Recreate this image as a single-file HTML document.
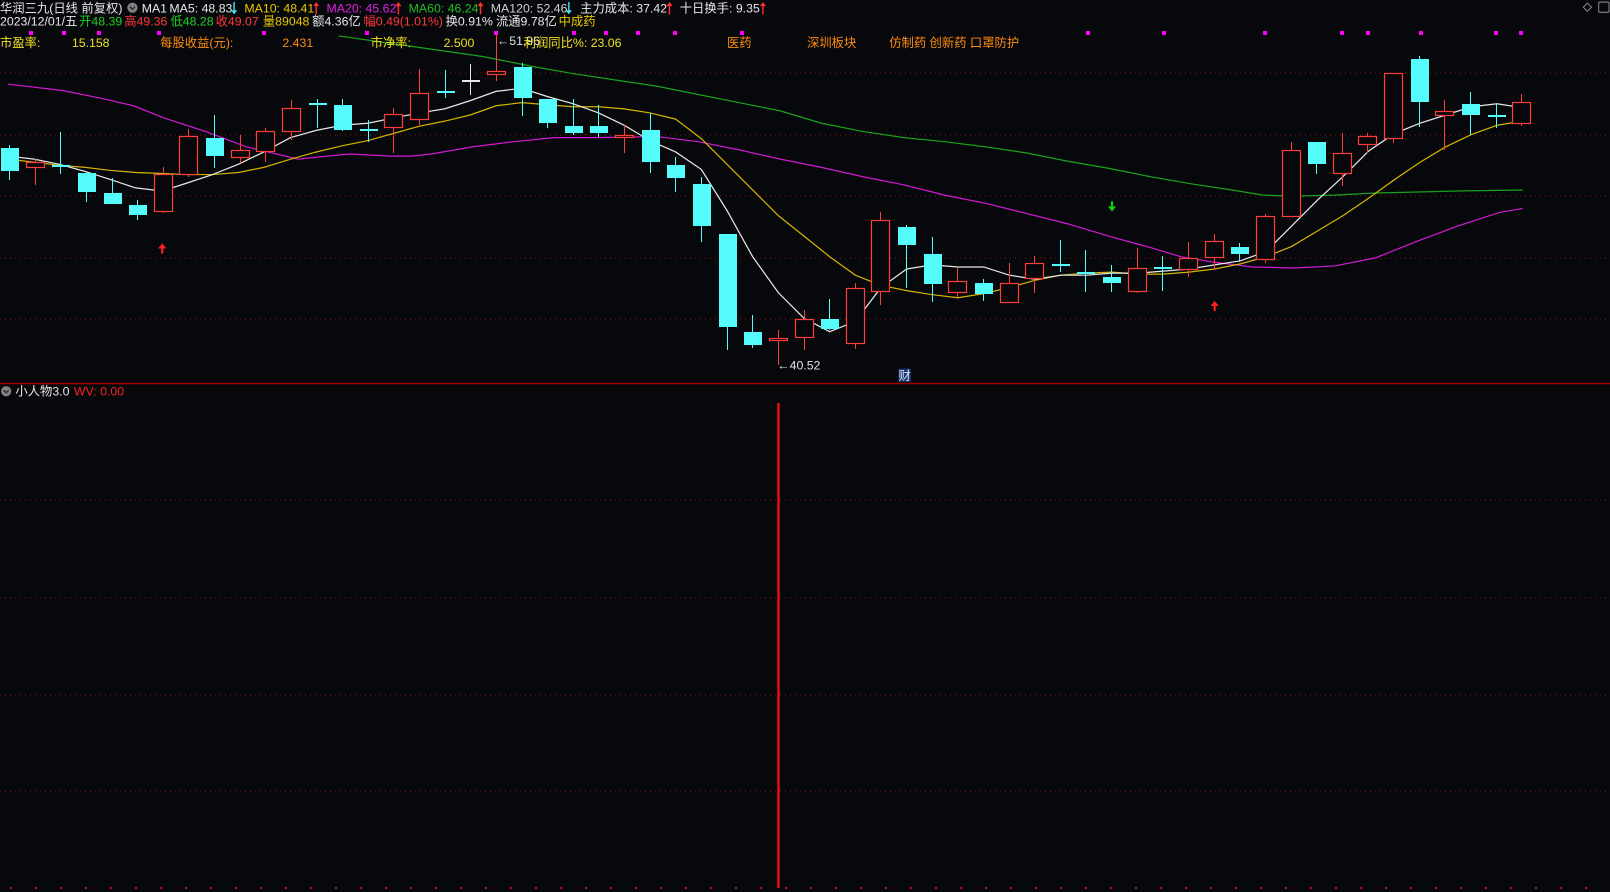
<!DOCTYPE html>
<html><head><meta charset="utf-8"><style>
html,body{margin:0;padding:0;background:#07080c;overflow:hidden}
svg{display:block}
text{font-family:"Liberation Sans","Noto Sans CJK SC",sans-serif;font-size:12px}
</style></head><body>
<svg id="s" width="1610" height="892" viewBox="0 0 1610 892" xmlns="http://www.w3.org/2000/svg">
<rect width="1610" height="892" fill="#07080c"/>
<g stroke="#8a1414" stroke-width="1" stroke-dasharray="1,4">
<line x1="0" y1="73" x2="1610" y2="73"/><line x1="0" y1="135" x2="1610" y2="135"/>
<line x1="0" y1="196" x2="1610" y2="196"/><line x1="0" y1="258" x2="1610" y2="258"/>
<line x1="0" y1="319" x2="1610" y2="319"/>
<line x1="0" y1="500" x2="1610" y2="500"/><line x1="0" y1="598" x2="1610" y2="598"/>
<line x1="0" y1="695" x2="1610" y2="695"/><line x1="0" y1="791" x2="1610" y2="791"/>
</g>
<g stroke="#c01818" stroke-width="2" stroke-dasharray="2,23"><line x1="10" y1="888" x2="1610" y2="888"/></g>
<line x1="0" y1="383.5" x2="1610" y2="383.5" stroke="#a00000" stroke-width="1.5"/>
<line x1="778.5" y1="403" x2="778.5" y2="888" stroke="#e41010" stroke-width="2.5"/>
<g id="mdots" fill="#ff00ff"></g>
<g transform="scale(1.0268)" fill="none" stroke-width="1.2">
<polyline id="l60" stroke="#1aa31a"/>
<polyline id="l20" stroke="#d21ad2"/>
<polyline id="l10" stroke="#d4b400"/>
<polyline id="l5" stroke="#e8e8e8"/>
</g>
<g id="cand"></g>
<g transform="scale(1.0268)">
<path d="M158 237 l-4 5 h3 v5 h2 v-5 h3z" fill="#ff2020"/>
<path d="M1183 293 l-4 5 h3 v5 h2 v-5 h3z" fill="#ff2020"/>
<path d="M1083 206 l-4 -5 h3 v-5 h2 v5 h3z" fill="#10d010"/>
<text x="757" y="360" fill="#e0e0e0">←40.52</text>
<text x="484" y="44" fill="#e0e0e0">←51.96</text>
<rect x="875" y="359" width="12" height="13" fill="#1a3a6a"/>
<text x="875" y="370" fill="#e0e0ff">财</text>
<text x="0" y="12" fill="#e8e8e8">华润三九(日线 前复权)</text>
<circle cx="129" cy="7.5" r="5" fill="#808080"/><path d="M126.5 6.5 l2.5 2.5 l2.5 -2.5" stroke="#222" fill="none" stroke-width="1.2"/>
<text x="138" y="12" fill="#e8e8e8">MA1</text>
<text x="165" y="12" fill="#e8e8e8">MA5: 48.83</text>
<text x="238" y="12" fill="#e8c800">MA10: 48.41</text>
<text x="318" y="12" fill="#e020e0">MA20: 45.62</text>
<text x="398" y="12" fill="#20c020">MA60: 46.24</text>
<text x="478" y="12" fill="#d0d0d0">MA120: 52.46</text>
<text x="565" y="12" fill="#e8e8e8">主力成本: 37.42</text>
<text x="662" y="12" fill="#e8e8e8">十日换手: 9.35</text>
<g fill="#40e0f0"><path d="M228 14 l-3 -4 h2.3 v-8 h1.4 v8 h2.3z"/><path d="M554 14 l-3 -4 h2.3 v-8 h1.4 v8 h2.3z"/></g>
<g fill="#ff3030"><path d="M308 2 l-3 4 h2.3 v8 h1.4 v-8 h2.3z"/><path d="M388 2 l-3 4 h2.3 v8 h1.4 v-8 h2.3z"/><path d="M468 2 l-3 4 h2.3 v8 h1.4 v-8 h2.3z"/><path d="M652 2 l-3 4 h2.3 v8 h1.4 v-8 h2.3z"/><path d="M743 2 l-3 4 h2.3 v8 h1.4 v-8 h2.3z"/></g>
<text x="0" y="25" fill="#e8e8e8">2023/12/01/五</text>
<text x="77" y="25" fill="#20d020">开48.39</text>
<text x="121" y="25" fill="#ff3838">高49.36</text>
<text x="166" y="25" fill="#20d020">低48.28</text>
<text x="210" y="25" fill="#ff3838">收49.07</text>
<text x="256" y="25" fill="#e8c800">量89048</text>
<text x="304" y="25" fill="#e8e8e8">额4.36亿</text>
<text x="354" y="25" fill="#ff3838">幅0.49(1.01%)</text>
<text x="434" y="25" fill="#e8e8e8">换0.91%</text>
<text x="483" y="25" fill="#e8e8e8">流通9.78亿</text>
<text x="544" y="25" fill="#e8c800">中成药</text>
<text x="0" y="46" fill="#f0e020">市盈率:</text>
<text x="70" y="46" fill="#f0e020">15.158</text>
<text x="156" y="46" fill="#ff8c10">每股收益(元):</text>
<text x="275" y="46" fill="#ff8c10">2.431</text>
<text x="361" y="46" fill="#f0e020">市净率:</text>
<text x="432" y="46" fill="#f0e020">2.500</text>
<text x="510" y="46" fill="#f0e020">利润同比%: 23.06</text>
<text x="708" y="46" fill="#ff8c10">医药</text>
<text x="786" y="46" fill="#ff8c10">深圳板块</text>
<text x="866" y="46" fill="#ff8c10">仿制药 创新药 口罩防护</text>
<circle cx="6" cy="381" r="5" fill="#808080"/><path d="M3.5 380 l2.5 2.5 l2.5 -2.5" stroke="#222" fill="none" stroke-width="1.2"/>
<text x="15" y="385" fill="#e8e8e8">小人物3.0</text>
<text x="72" y="385" fill="#ff2020">WV: 0.00</text>
<path d="M1546 3 l4 4 l-4 4 l-4 -4z" fill="none" stroke="#888"/>
<rect x="1557" y="2" width="10" height="10" rx="1" fill="none" stroke="#888"/>
</g>
</svg>
<script>
function P(id,s){document.getElementById(id).setAttribute("points",s);}
P("l5","8,152 33,155 58,160 83,167 108,175 132,183 158,186 183,178 207,170 232,160 257,148 283,134 308,127 333,122 358,120 383,115 408,110 433,106 458,98 483,89 508,86 533,94 558,101 583,110 608,122 633,137 658,148 683,165 708,205 733,250 758,285 783,310 808,323 833,313 858,280 883,262 908,258 933,260 958,260 983,268 1008,272 1033,268 1058,268 1083,266 1108,266 1133,264 1158,262 1183,258 1208,254 1233,245 1258,220 1283,195 1308,172 1333,147 1358,130 1383,120 1408,112 1433,104 1458,101 1483,105");
P("l10","8,155 33,158 58,161 83,163 108,166 132,168 158,169 183,170 207,170 232,168 257,163 283,155 308,148 333,142 358,137 383,130 408,123 433,118 458,112 483,103 508,100 533,102 558,104 583,104 608,106 633,110 658,116 683,135 708,160 733,185 758,210 783,230 808,250 833,268 858,278 883,283 908,287 933,290 958,286 983,280 1008,273 1033,268 1058,266 1083,265 1108,267 1133,267 1158,265 1183,262 1208,257 1233,250 1258,240 1283,225 1308,210 1333,193 1358,175 1383,158 1408,143 1433,131 1458,122 1483,118");
P("l20","8,82 60,88 100,96 130,103 160,115 200,128 240,143 290,155 340,150 380,152 400,152 420,150 460,143 500,138 540,134 580,134 640,133 680,138 720,146 760,155 800,163 840,172 880,180 920,190 960,198 1000,208 1040,218 1080,230 1120,241 1150,250 1180,255 1220,260 1260,261 1300,259 1340,251 1380,235 1420,220 1460,207 1483,203");
P("l60","330,35 400,45 470,55 520,65 560,72 600,78 640,84 680,92 720,100 760,108 800,120 840,128 880,134 920,138 960,143 1000,149 1040,157 1080,164 1120,172 1160,179 1200,185 1230,190 1260,191 1300,190 1340,188 1380,187 1420,186 1483,185");
var D=[["c",148,171,145,180],["r",162,167,159,185],["c",165,167,132,174],["c",173,192,172,202],["c",193,204,178,204],["c",205,215,200,220],["r",174,211,167,213],["r",136,174,129,177],["c",138,156,115,168],["r",150,157,135,163],["r",131,151,128,162],["r",108,131,100,140],["c",103,105,99,128],["c",105,130,99,131],["c",129,130,120,142],["r",114,127,108,153],["r",93,119,69,125],["c",91,93,70,98],["w",80,81,64,95],["r",71,74,34,81],["c",67,98,63,116],["c",99,123,99,128],["c",126,133,99,135],["c",126,133,105,137],["r",135,136,125,153],["c",130,162,113,173],["c",165,178,157,192],["c",184,226,177,242],["c",234,327,234,350],["c",332,345,315,348],["r",338,339,330,365],["r",319,337,310,350],["c",319,329,299,330],["r",288,343,283,349],["r",220,291,212,305],["c",227,245,225,288],["c",254,284,237,302],["r",281,292,268,297],["c",283,294,279,301],["r",283,302,263,302],["r",263,278,256,293],["c",264,265,240,272],["c",272,274,250,292],["c",277,283,265,292],["r",268,291,248,293],["c",267,269,256,291],["r",258,269,242,277],["r",241,257,234,270],["c",247,254,243,262],["r",216,259,214,263],["r",150,216,142,216],["c",142,164,142,174],["r",153,173,133,186],["r",136,144,133,153],["r",73,138,73,143],["c",59,102,56,127],["r",111,115,100,150],["c",104,115,92,135],["c",115,117,104,128],["r",102,123,94,126]];
var g=document.getElementById("cand"),h="";
D.forEach(function(d,i){var x=Math.round(9+25.63*i),t=d[1],b=d[2];if(b-t<2)b=t+2;
var col=d[0]=="r"?"#ff3c3c":(d[0]=="w"?"#e8e8e8":"#54fcfc");
h+='<line x1="'+(x+.5)+'" y1="'+d[3]+'" x2="'+(x+.5)+'" y2="'+t+'" stroke="'+col+'"/>';
h+='<line x1="'+(x+.5)+'" y1="'+b+'" x2="'+(x+.5)+'" y2="'+Math.max(b,d[4])+'" stroke="'+col+'"/>';
if(d[0]=="r")h+='<rect x="'+(x-8.5)+'" y="'+(t+.5)+'" width="18" height="'+(b-t)+'" fill="#07080c" stroke="'+col+'" stroke-width="1.2"/>';
else h+='<rect x="'+(x-8)+'" y="'+t+'" width="18" height="'+(b-t)+'" fill="'+col+'"/>';});
g.innerHTML=h;
var md=[31,64,99,159,264,367,496,574,606,638,675,742,1088,1164,1265,1342,1368,1421,1496,1521],m="";
md.forEach(function(x){m+='<rect x="'+(x-2)+'" y="31" width="4" height="4"/>';});
document.getElementById("mdots").innerHTML=m;
</script>
</body></html>
